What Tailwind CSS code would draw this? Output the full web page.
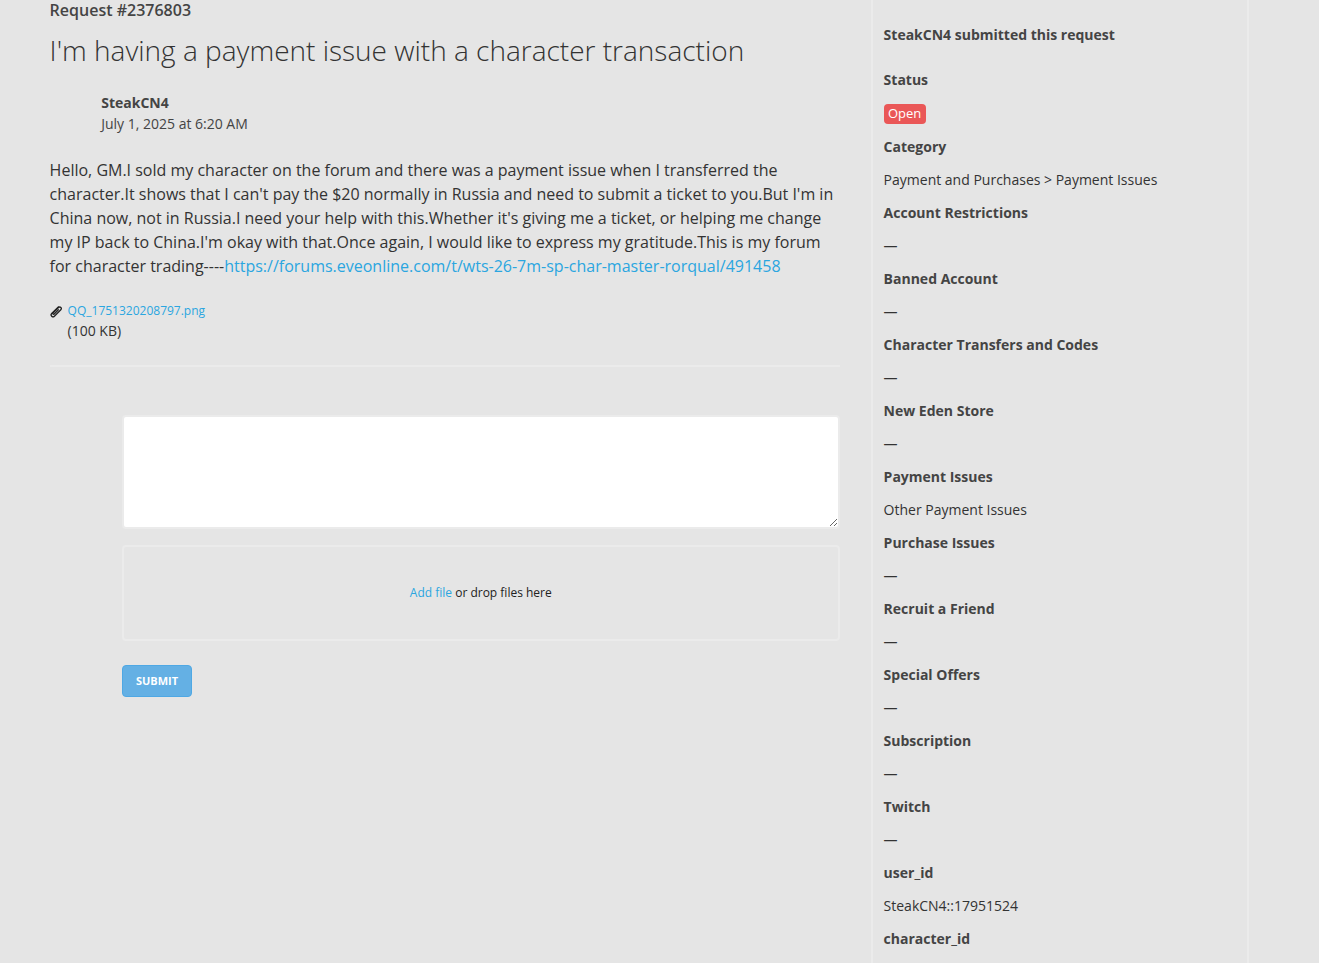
<!DOCTYPE html>
<html lang="en">

<head>
    <meta charset="UTF-8">
    <title>Request #2376803</title>
    <script src="https://cdn.jsdelivr.net/npm/@tailwindcss/browser@4"></script>
</head>

<body class="bg-[#e5e5e5] font-['Open_Sans',sans-serif] text-[#333]">
    <div class="flex h-screen overflow-hidden">
        <!-- request -->
        <main class="w-[790px] ml-[49.6px] shrink-0">
            <h2 class="text-base font-semibold leading-[21px] text-[#444]">Request #2376803</h2>
            <h1 class="mt-[8px] text-[28px] leading-[42px] font-light text-[#333]">I'm having a payment issue with a character transaction</h1>

            <div class="mt-[21px] ml-[51.6px] text-sm leading-[21px]">
                <div class="font-bold text-[#444]">SteakCN4</div>
                <div class="text-[#444]">July 1, 2025 at 6:20 AM</div>
            </div>

            <p class="mt-[24px] text-base leading-[24px] text-[#333]">Hello, GM.I sold my character on the forum and there was a payment issue when I transferred the character.It shows that I can't pay the $20 normally in Russia and need to submit a ticket to you.But I'm in China now, not in Russia.I need your help with this.Whether it's giving me a ticket, or helping me change my IP back to China.I'm okay with that.Once again, I would like to express my gratitude.This is my forum for character trading----<a href="#" class="text-[#2ba6e0]">https://forums.eveonline.com/t/wts-26-7m-sp-char-master-rorqual/491458</a></p>

            <!-- attachment -->
            <div class="mt-[23px] flex">
                <svg class="w-[12px] h-[13px] mt-[4px] mr-[6px] text-[#222]" viewBox="0 0 12 13" fill="none" stroke="currentColor" stroke-width="1.3">
                    <path d="M8.6 1.6 1.7 8.5a1.9 1.9 0 0 0 2.7 2.7l6.4-6.4a1.6 1.6 0 0 0-2.3-2.3L2.9 8.1a.8.8 0 0 0 1.1 1.1l4.8-4.8" />
                </svg>
                <div>
                    <a href="#" class="block text-xs leading-[19px] text-[#2ba6e0]">QQ_1751320208797.png</a>
                    <div class="text-sm leading-[21px] text-[#333]">(100 KB)</div>
                </div>
            </div>

            <div class="mt-[24px] border-t-2 border-[#ebebeb]"></div>

            <!-- reply form -->
            <form class="mt-[48px] ml-[72.4px]">
                <textarea class="block w-full h-[114px] bg-white border-2 border-[#ebebeb] rounded-[4px] outline-none"></textarea>
                <div class="mt-[16px] h-[96px] flex items-center justify-center border-2 border-[#ebebeb] rounded-[4px] text-xs text-[#222]">
                    <span><a href="#" class="text-[#2ba6e0]">Add file</a> or drop files here</span>
                </div>
                <button type="button" class="mt-[24px] block w-[70px] h-[32px] bg-[#64b0e4] border border-[#4ea8e4] rounded-[4px] text-white text-[11px] font-bold uppercase">Submit</button>
            </form>
        </main>

        <!-- details -->
        <aside class="ml-[31px] w-[378px] shrink-0 border-x-2 border-[#ebebeb] px-[11px] text-sm leading-[21px]">
            <div class="mt-[24px] font-bold text-[#444]">SteakCN4 submitted this request</div>
            <dl class="mt-[24px]">
                <dt class="font-bold text-[#444]">Status</dt>
                <dd class="mt-[14px] mb-[12px] h-[20px]">
                    <span class="block w-[42px] h-[20px] bg-[#ea5757] rounded-[4px] text-white text-[13px] leading-[19px] text-center">Open</span>
                </dd>
                <dt class="font-bold text-[#444]">Category</dt>
                <dd class="mt-[12px] mb-[12px]">Payment and Purchases &gt; Payment Issues</dd>
                <dt class="font-bold text-[#444]">Account Restrictions</dt>
                <dd class="mt-[12px] mb-[12px]">—</dd>
                <dt class="font-bold text-[#444]">Banned Account</dt>
                <dd class="mt-[12px] mb-[12px]">—</dd>
                <dt class="font-bold text-[#444]">Character Transfers and Codes</dt>
                <dd class="mt-[12px] mb-[12px]">—</dd>
                <dt class="font-bold text-[#444]">New Eden Store</dt>
                <dd class="mt-[12px] mb-[12px]">—</dd>
                <dt class="font-bold text-[#444]">Payment Issues</dt>
                <dd class="mt-[12px] mb-[12px]">Other Payment Issues</dd>
                <dt class="font-bold text-[#444]">Purchase Issues</dt>
                <dd class="mt-[12px] mb-[12px]">—</dd>
                <dt class="font-bold text-[#444]">Recruit a Friend</dt>
                <dd class="mt-[12px] mb-[12px]">—</dd>
                <dt class="font-bold text-[#444]">Special Offers</dt>
                <dd class="mt-[12px] mb-[12px]">—</dd>
                <dt class="font-bold text-[#444]">Subscription</dt>
                <dd class="mt-[12px] mb-[12px]">—</dd>
                <dt class="font-bold text-[#444]">Twitch</dt>
                <dd class="mt-[12px] mb-[12px]">—</dd>
                <dt class="font-bold text-[#444]">user_id</dt>
                <dd class="mt-[12px] mb-[12px]">SteakCN4::17951524</dd>
                <dt class="font-bold text-[#444]">character_id</dt>
            </dl>
        </aside>
    </div>
</body>

</html>
